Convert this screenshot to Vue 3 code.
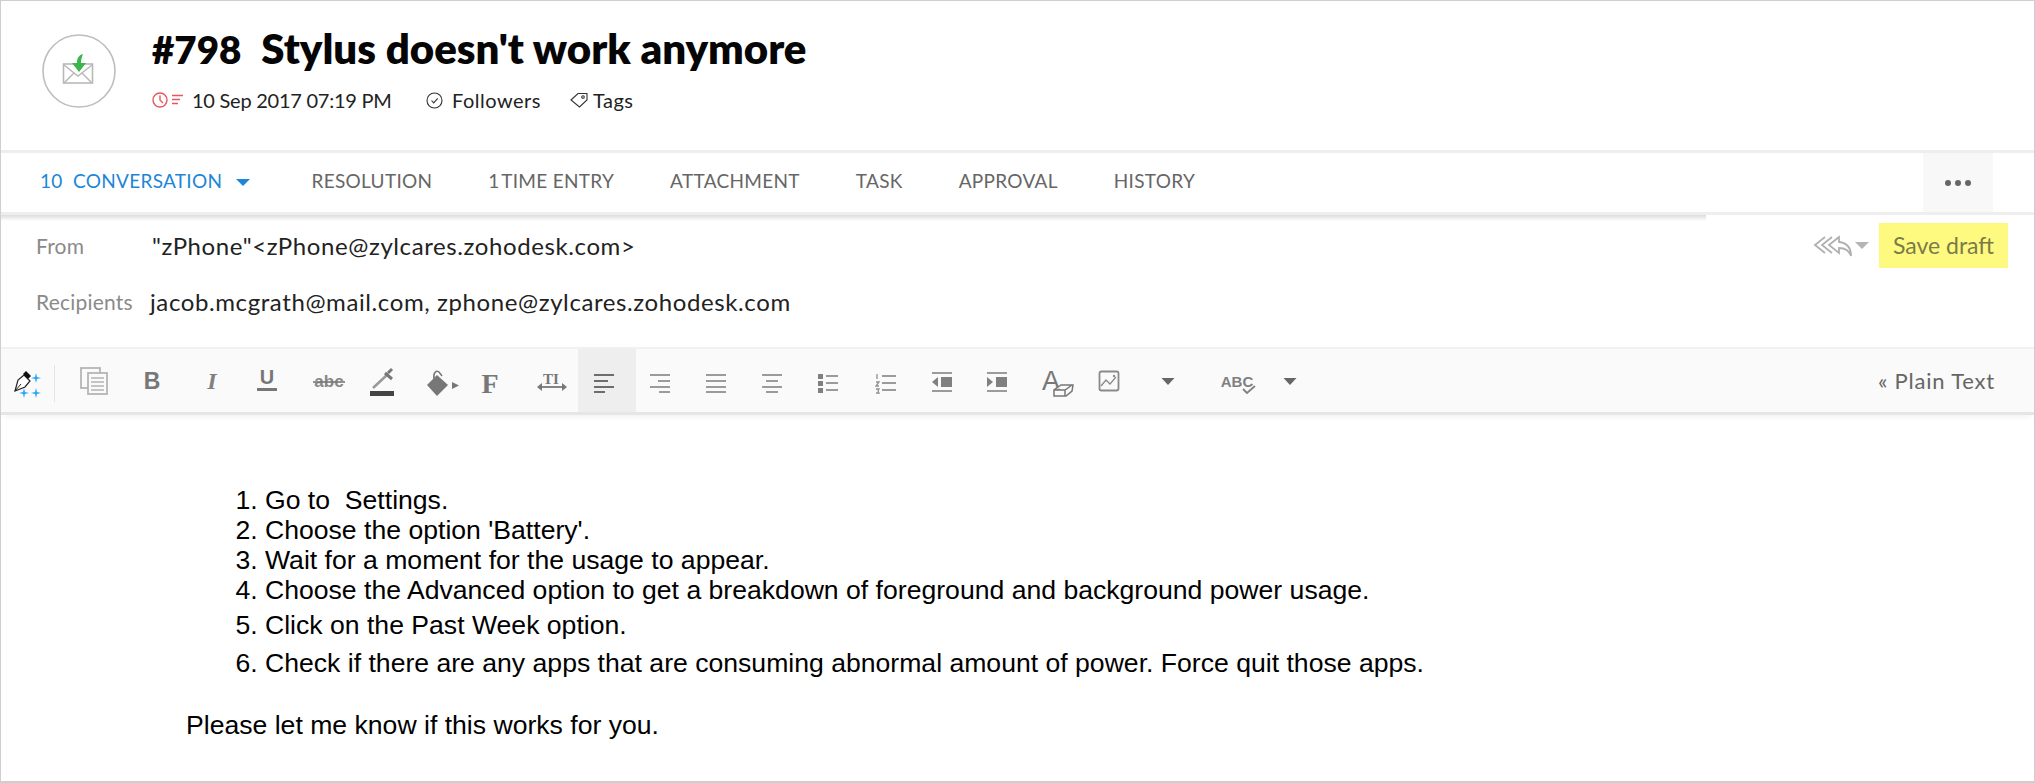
<template>
  <div class="ticket">
    <header class="head">
      <div class="avatar">
        <svg width="76" height="76" viewBox="0 0 76 76">
          <circle cx="38" cy="38" r="36" fill="#fff" stroke="#bdbdbd" stroke-width="1.6" />
          <rect x="22.500" y="31" width="29" height="19" fill="#fff" stroke="#b9b9b9" stroke-width="1.6" />
          <path d="M23 32l14 11 14-11M23 50l10-10M51 50L41 40" fill="none" stroke="#b9b9b9" stroke-width="1.5" />
          <path d="M42 21c-4 1-6 4-6 8v1h-5l7 9 7-9h-5c0-4 1-6 2-9z" fill="#3cb54a" />
        </svg>
      </div>
      <div class="head-main">
        <h1 class="title"><span class="num">#798</span>Stylus doesn't work anymore</h1>
        <div class="meta">
          <span class="meta-item due">
            <svg width="32" height="16" viewBox="0 0 32 16" fill="none" stroke="#e9565f" stroke-width="1.4">
              <circle cx="8" cy="8" r="7" />
              <path d="M8 3.500V8l3 3M20 3.500h11M20 7.500h8M20 11.500h6" />
            </svg>
            <span>10 Sep 2017 07:19 PM</span>
          </span>
          <span class="meta-item followers">
            <svg width="17" height="17" viewBox="0 0 17 17" fill="none" stroke="#333" stroke-width="1.1">
              <circle cx="8.500" cy="8.500" r="7.500" />
              <path d="M5.500 8.500l2.200 2.400 4-4.600" />
            </svg>
            <span>Followers</span>
          </span>
          <span class="meta-item tags">
            <svg width="18" height="16" viewBox="0 0 18 16" fill="none" stroke="#333" stroke-width="1.1">
              <path d="M1 8l7-6.500h9V8l-7.500 7z" />
              <circle cx="13" cy="5" r="1.300" />
            </svg>
            <span>Tags</span>
          </span>
        </div>
      </div>
    </header>

    <nav class="tabs">
      <a class="tab active">10&nbsp; CONVERSATION <i class="caret blue"></i></a>
      <a v-for="tab in tabs" :key="tab" class="tab">{{ tab }}</a>
      <div class="more"><b></b><b></b><b></b></div>
    </nav>

    <section class="compose">
      <div class="row from">
        <label>From</label>
        <span class="value">"zPhone"&lt;zPhone@zylcares.zohodesk.com&gt;</span>
        <div class="actions">
          <svg width="40" height="22" viewBox="0 0 40 22" fill="none" stroke="#b0b0b0" stroke-width="1.8">
            <path d="M12 2L2 10l10 8M19 2L9 10l10 8" />
            <path d="M26 2L16 10l10 8v-5c6 0 10 2 12 8 0-8-4-13-12-14z" fill="#fff" />
          </svg>
          <i class="caret grey"></i>
          <span class="save">Save draft</span>
        </div>
      </div>
      <div class="row recipients">
        <label>Recipients</label>
        <span class="value">jacob.mcgrath@mail.com, zphone@zylcares.zohodesk.com</span>
      </div>
    </section>

    <div class="toolbar">
      <span v-for="tool in placedTools" :key="tool.id" :class="['tool', { on: tool.on, wide: tool.on }]" :style="{ marginLeft: tool.gap + 'px' }">
        <svg width="40" height="40" viewBox="0 0 40 40" v-html="tool.svg"></svg>
      </span>
      <span class="plain">« Plain Text</span>
    </div>

    <article class="body">
      <ol>
        <li>Go to &nbsp;Settings.</li>
        <li>Choose the option 'Battery'.</li>
        <li>Wait for a moment for the usage to appear.</li>
        <li>Choose the Advanced option to get a breakdown of foreground and background power usage.</li>
        <li class="gap-a">Click on the Past Week option.</li>
        <li class="gap-b">Check if there are any apps that are consuming abnormal amount of power. Force quit those apps.</li>
      </ol>
      <p>Please let me know if this works for you.</p>
    </article>
  </div>
</template>

<script setup>
const tabs = ['RESOLUTION', '1\u200aTIME ENTRY', 'ATTACHMENT', 'TASK', 'APPROVAL', 'HISTORY']

const lines = (rows, stroke = '#8a8a8a') =>
  rows.map(([a, b, y]) => `<path d="M${a} ${y}H${b}" stroke="${stroke}" stroke-width="1.7"/>`).join('')

// c is the icon's centre on the x axis of the toolbar
const tools = [
  { id: 'pen', c: 28, svg: `<path d="M7 30l3-11 6-5 6 6-5 6z" fill="#fff" stroke="#222" stroke-width="1.2"/><path d="M7 30l6-7" stroke="#222"/><path d="M15 13l3-3 5 5-3 3z" fill="#111"/><path d="M28 12l1 4 4 1-4 1-1 4-1-4-4-1 4-1zM16 27l1 4 4 1-4 1-1 4-1-4-4-1 4-1zM28 27l1 4 4 1-4 1-1 4-1-4-4-1 4-1z" fill="#2ea6f5"/>` },
  { id: 'copy', c: 93.500, svg: `<g fill="#fafafa" stroke="#b5b5b5" stroke-width="1.800"><rect x="7" y="7" width="19" height="20"/><rect x="14" y="12" width="19" height="21"/></g>` + lines([[17, 30, 17], [17, 30, 21], [17, 30, 25], [17, 30, 29]], '#bbb') },
  { id: 'bold', c: 152, svg: `<text x="20" y="28" text-anchor="middle" font-family="Liberation Sans" font-weight="700" font-size="23" fill="#777">B</text>` },
  { id: 'italic', c: 212, svg: `<text x="20" y="28" text-anchor="middle" font-family="Liberation Serif" font-weight="700" font-style="italic" font-size="24" fill="#808080">I</text>` },
  { id: 'under', c: 267, svg: `<text x="20" y="23" text-anchor="middle" font-family="Liberation Sans" font-weight="700" font-size="20" fill="#777">U</text><rect x="10" y="27" width="20" height="3" fill="#777"/>` },
  { id: 'strike', c: 329, svg: `<text x="20" y="26" text-anchor="middle" font-family="Liberation Sans" font-weight="700" font-size="17" fill="#888">abc</text><path d="M4 21h32" stroke="#777" stroke-width="1.600"/>` },
  { id: 'color', c: 382, svg: `<path d="M11 27l15-14" stroke="#999" stroke-width="2.500"/><path d="M23 12l7 6M26 12l4-4" stroke="#777" stroke-width="3"/><rect x="8" y="30" width="24" height="5" fill="#444"/>` },
  { id: 'fill', c: 441, svg: `<path d="M6 24l10-10 11 10-11 11z" fill="#777"/><path d="M13 18c-1-6 2-9 5-7l3 4" fill="none" stroke="#777" stroke-width="1.500"/><path d="M31 21l7 3.500-7 3.500z" fill="#777"/>` },
  { id: 'font', c: 490, svg: `<text x="20" y="32" text-anchor="middle" font-family="Liberation Serif" font-weight="700" font-size="28" fill="#777">F</text>` },
  { id: 'dir', c: 552, svg: `<text x="19" y="23" text-anchor="middle" font-family="Liberation Serif" font-weight="700" font-size="15" fill="#777">TI</text><path d="M8 26h24" stroke="#777" stroke-width="1.800"/><path d="M5 26l5-4v8zM35 26l-5-4v8z" fill="#777"/>` },
  { id: 'left', c: 607, on: true, svg: lines([[7, 27, 14], [7, 21, 20], [7, 27, 26], [7, 18, 31]], '#555') },
  { id: 'right', c: 660, svg: lines([[10, 30, 14], [18, 30, 20], [10, 30, 26], [19, 30, 31]]) },
  { id: 'justify', c: 716, svg: lines([[10, 30, 14], [10, 30, 20], [10, 30, 26], [10, 30, 31]]) },
  { id: 'center', c: 772, svg: lines([[10, 30, 14], [14, 26, 20], [10, 30, 26], [14, 26, 31]]) },
  { id: 'ul', c: 828, svg: `<g fill="#808080"><rect x="10" y="13" width="5" height="5"/><rect x="10" y="20" width="5" height="5"/><rect x="10" y="27" width="5" height="5"/></g>` + lines([[18, 30, 15], [18, 30, 22], [18, 30, 29]]) },
  { id: 'ol', c: 886, svg: `<path d="M11 13v5M10 21h3l-3 4h3M10 28h3l-1 2 1 2h-3" fill="none" stroke="#909090" stroke-width="1.300"/>` + lines([[16, 30, 15], [16, 30, 22], [16, 30, 29]]) },
  { id: 'outdent', c: 942, svg: lines([[10, 30, 12], [10, 30, 30]]) + `<path d="M10 21l6-5v10z" fill="#808080"/><rect x="19" y="16" width="11" height="10" fill="#808080"/>` },
  { id: 'indent', c: 997, svg: lines([[10, 30, 12], [10, 30, 30]]) + `<path d="M16 21l-6-5v10z" fill="#808080"/><rect x="19" y="16" width="11" height="10" fill="#808080"/>` },
  { id: 'clear', c: 1059, svg: `<text x="12" y="29" text-anchor="middle" font-family="Liberation Sans" font-size="27" fill="#777">A</text><path d="M15 35v-6l7-5h12l-1 6-6 5zM15 29h11l7-5M26 29v6" fill="#fafafa" stroke="#777" stroke-width="1.500"/>` },
  { id: 'image', c: 1109, svg: `<rect x="10.500" y="10.500" width="19" height="19" rx="2" fill="none" stroke="#8a8a8a" stroke-width="1.800"/><path d="M12 25l5-6 4 4 6-7" fill="none" stroke="#8a8a8a" stroke-width="1.300"/><circle cx="25" cy="15" r="1.200" fill="#8a8a8a"/>` },
  { id: 'caret1', c: 1168, svg: `<path d="M13.500 17h13L20 24z" fill="#666"/>` },
  { id: 'spell', c: 1240, svg: `<text x="17" y="26" text-anchor="middle" font-family="Liberation Sans" font-weight="700" font-size="15" fill="#808080">ABC</text><path d="M23 28l4 4 8-7" fill="none" stroke="#808080" stroke-width="1.800"/>` },
  { id: 'caret2', c: 1290, svg: `<path d="M13.500 17h13L20 24z" fill="#666"/>` }
]

// turn the centre positions into the gap each button needs in the flex row
const placedTools = tools.map((tool, i) => {
  const prev = tools[i - 1]
  const half = tool.on ? 29 : 20
  const prevEdge = prev ? prev.c + (prev.on ? 29 : 20) : 1
  return { ...tool, gap: tool.c - half - prevEdge }
})
</script>

<style scoped>
.ticket {
  height: 783px;
  box-sizing: border-box;
  border: 1px solid #cfcfcf;
  border-bottom-width: 2px;
  font-family: Lato, "Open Sans", sans-serif;
  color: #111;
  overflow: hidden;
  background: #fff;
}

.head {
  display: flex;
  height: 149px;
  box-sizing: border-box;
  padding: 32px 0 0 40px;
}

.avatar {
  width: 111px;
}

.head-main {
  display: flex;
  flex-direction: column;
}

.title {
  margin: -2px 0 0;
  font-size: 42px;
  line-height: 34px;
  font-weight: 800;
  color: #050505;
  white-space: nowrap;
}

.num {
  font-size: 38.5px;
  margin-right: 20px;
}

.meta {
  display: flex;
  align-items: center;
  margin-top: 22px;
  font-size: 20px;
  line-height: 24px;
  letter-spacing: 0.5px;
  color: #222;
}

.meta-item {
  display: flex;
  align-items: center;
}

.due {
  gap: 8px;
  width: 274px;
  letter-spacing: -0.25px;
}

.followers {
  gap: 9px;
  width: 144px;
}

.tags {
  gap: 5px;
}

.tabs {
  display: flex;
  align-items: center;
  height: 62px;
  box-sizing: border-box;
  border-top: 3px solid #eee;
  padding-left: 39px;
}

.tab {
  font-size: 19px;
  color: #666;
  letter-spacing: 0.3px;
  margin-right: 56px;
  margin-bottom: 5px;
  white-space: nowrap;
}

.tab.active {
  color: #1d86d8;
  margin-right: 61px;
}

.caret {
  display: inline-block;
  width: 0;
  height: 0;
  border-left: 7px solid transparent;
  border-right: 7px solid transparent;
}

.caret.blue {
  border-top: 7px solid #1d86d8;
  margin-left: 9px;
  vertical-align: 2px;
}

.caret.grey {
  border-top: 7px solid #b5b5b5;
}

.more {
  display: flex;
  align-items: center;
  justify-content: center;
  align-self: stretch;
  gap: 4px;
  margin-left: auto;
  margin-right: 41px;
  width: 70px;
  background: #f8f8f8;
}

.more b {
  width: 6px;
  height: 6px;
  border-radius: 50%;
  background: #666;
}

.compose {
  height: 135px;
  box-sizing: border-box;
  border-top: 3px solid #eee;
  background: linear-gradient(#dcdcdc, #fff 6px) no-repeat 0 0 / 1705px 7px;
  font-size: 24px;
  letter-spacing: 0.6px;
}

.row {
  display: flex;
  align-items: center;
  padding-left: 35px;
}

.row label {
  width: 116px;
  font-size: 21px;
  letter-spacing: 0.2px;
  color: #8a8a8a;
}

.row .value {
  color: #222;
}

.from {
  height: 53px;
  margin-top: 4px;
}

.recipients {
  height: 40px;
  margin-top: 9px;
}

.recipients .value {
  margin-left: -2px;
}

.actions {
  display: flex;
  align-items: center;
  margin-left: auto;
  margin-right: 26px;
  gap: 2px;
}

.save {
  width: 129px;
  height: 45px;
  margin-left: 8px;
  font-size: 23px;
  letter-spacing: 0;
  line-height: 45px;
  text-align: center;
  background: #fefa7f;
  color: #7b7a48;
}

.toolbar {
  display: flex;
  align-items: center;
  height: 65px;
  box-sizing: border-box;
  border-top: 2px solid #f1f1f1;
  background: #fafafa;
  box-shadow: 0 3px 0 #e6e6e6, 0 8px 6px -3px #f2f2f2;
}

.tool {
  position: relative;
  display: flex;
  justify-content: center;
  align-items: center;
  flex: none;
  width: 40px;
  height: 100%;
}

.tool:first-child::after {
  content: "";
  position: absolute;
  right: -7px;
  top: 16px;
  bottom: 10px;
  width: 1px;
  background: #e4e4e4;
}

.tool.wide {
  width: 58px;
}

.tool.on {
  background: #eee;
}

.plain {
  margin-left: auto;
  margin-right: 39px;
  font-size: 22px;
  letter-spacing: 0.8px;
  color: #666;
}

.body {
  padding-top: 73px;
  font-family: "Liberation Sans", Arial, sans-serif;
  font-size: 26.6px;
  line-height: 30px;
  color: #000;
}

.body ol {
  margin: 0;
  padding-left: 264px;
}

.gap-a {
  margin-top: 5px;
}

.gap-b {
  margin-top: 8px;
}

.body p {
  margin: 32px 0 0 185px;
}
</style>

<style>
html, body {
  margin: 0;
  background: #fff;
}
</style>
